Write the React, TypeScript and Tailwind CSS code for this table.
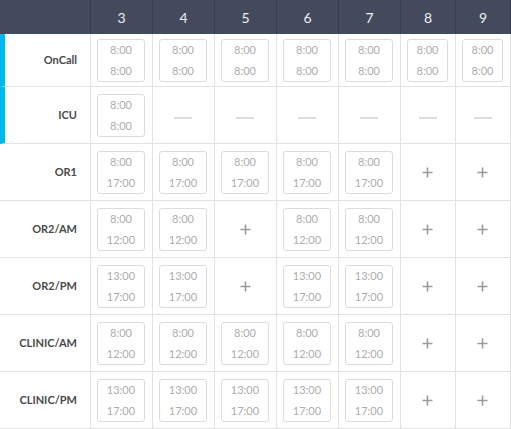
import React from 'react';

type Cell = [string, string] | 'plus' | 'dash';

const days = [3, 4, 5, 6, 7, 8, 9];

const rows: { name: string; marked?: boolean; tall?: boolean; cells: Cell[] }[] = [
  {
    name: 'OnCall',
    marked: true,
    cells: Array.from({ length: 7 }, () => ['8:00', '8:00'] as [string, string]),
  },
  {
    name: 'ICU',
    marked: true,
    tall: true,
    cells: [['8:00', '8:00'], 'dash', 'dash', 'dash', 'dash', 'dash', 'dash'],
  },
  {
    name: 'OR1',
    tall: true,
    cells: [['8:00', '17:00'], ['8:00', '17:00'], ['8:00', '17:00'], ['8:00', '17:00'], ['8:00', '17:00'], 'plus', 'plus'],
  },
  {
    name: 'OR2/AM',
    tall: true,
    cells: [['8:00', '12:00'], ['8:00', '12:00'], 'plus', ['8:00', '12:00'], ['8:00', '12:00'], 'plus', 'plus'],
  },
  {
    name: 'OR2/PM',
    tall: true,
    cells: [['13:00', '17:00'], ['13:00', '17:00'], 'plus', ['13:00', '17:00'], ['13:00', '17:00'], 'plus', 'plus'],
  },
  {
    name: 'CLINIC/AM',
    tall: true,
    cells: [['8:00', '12:00'], ['8:00', '12:00'], ['8:00', '12:00'], ['8:00', '12:00'], ['8:00', '12:00'], 'plus', 'plus'],
  },
  {
    name: 'CLINIC/PM',
    tall: true,
    cells: [['13:00', '17:00'], ['13:00', '17:00'], ['13:00', '17:00'], ['13:00', '17:00'], ['13:00', '17:00'], 'plus', 'plus'],
  },
];

const Plus = () => (
  <svg width="11" height="11" viewBox="0 0 11 11" className="text-[#9a9a9a]">
    <path d="M5.5 0.5v10M0.5 5.5h10" stroke="currentColor" strokeWidth="1.6" />
  </svg>
);

const App: React.FC = () => {
  return (
    <div
      className="w-[511px] h-[429px] bg-white overflow-hidden"
      style={{ fontFamily: 'Lato, "Open Sans", sans-serif' }}
    >
      <div className="grid grid-cols-[91px_62px_62px_62px_62px_62px_55px_55px]">
        {/* Header */}
        <div className="h-[34px] bg-[#434a5c] border-r border-[#363d4d]" />
        {days.map((d) => (
          <div
            key={d}
            className="h-[34px] bg-[#434a5c] border-r border-[#363d4d] last:border-r-0 flex items-center justify-center text-[14px] text-[#eef0f3]"
          >
            {d}
          </div>
        ))}

        {/* Rows */}
        {rows.map((row) => (
          <React.Fragment key={row.name}>
            <div
              className={`${row.tall ? 'h-[57px]' : 'h-[53px]'} border-r border-b border-[#e2e2e2] flex items-center justify-end pr-[13px] text-[11px] font-bold text-[#4a4a4a] ${
                row.marked ? 'border-l-[5px] border-l-[#00b7ee]' : ''
              }`}
            >
              {row.name}
            </div>
            {row.cells.map((c, i) => (
              <div
                key={i}
                className={`${row.tall ? 'h-[57px]' : 'h-[53px]'} border-r border-b border-[#e2e2e2] flex items-center justify-center pl-[6px] pr-[7px]`}
              >
                {c === 'plus' ? (
                  <Plus />
                ) : c === 'dash' ? (
                  <div className="w-[18px] h-[2px] bg-[#dddddd] mt-[5px]" />
                ) : (
                  <div className="w-full h-[43px] border border-[#dcdcdc] rounded-[3px] flex flex-col items-center justify-center leading-[21px] text-[11px] text-[#adadad]">
                    <span>{c[0]}</span>
                    <span>{c[1]}</span>
                  </div>
                )}
              </div>
            ))}
          </React.Fragment>
        ))}
      </div>
    </div>
  );
};

export default App;
